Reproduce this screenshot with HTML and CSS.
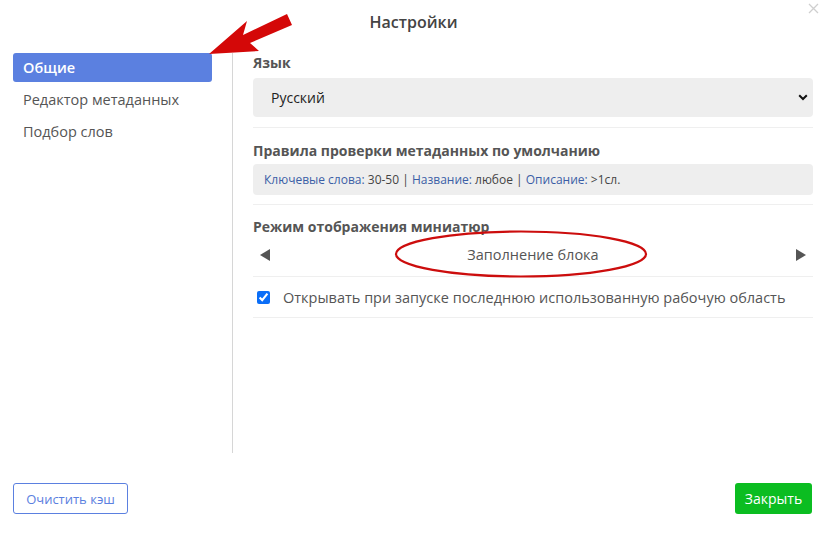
FILE: index.html
```html
<!DOCTYPE html>
<html lang="ru">
<head>
<meta charset="utf-8">
<title>Настройки</title>
<link rel="stylesheet" href="styles.css">
</head>
<body>
<div class="dialog">
  <header class="header">
    <h1 class="title">Настройки</h1>
    <button class="close" aria-label="Закрыть">
      <svg width="11" height="11" viewBox="0 0 11 11"><path d="M1 1L10 10M10 1L1 10" stroke="#cfcfcf" stroke-width="1.3" fill="none"/></svg>
    </button>
  </header>
  <div class="main">
    <nav class="sidebar">
      <a class="nav-item active">Общие</a>
      <a class="nav-item">Редактор метаданных</a>
      <a class="nav-item">Подбор слов</a>
    </nav>
    <section class="content">
      <div class="group group-lang">
        <div class="label">Язык</div>
        <div class="select-wrap">
          <select class="select"><option>Русский</option></select>
          <svg class="chevron" width="10" height="7" viewBox="0 0 10 7"><path d="M1.2 1.2L5 5L8.8 1.2" stroke="#111" stroke-width="2" fill="none"/></svg>
        </div>
      </div>
      <div class="group group-rules">
        <div class="label">Правила проверки метаданных по умолчанию</div>
        <div class="rules"><span class="key">Ключевые слова:</span> 30-50 | <span class="key">Название:</span> любое | <span class="key">Описание:</span> &gt;1сл.</div>
      </div>
      <div class="group group-thumb">
        <div class="label">Режим отображения миниатюр</div>
        <div class="switcher">
          <span class="tri tri-left"></span>
          <span class="switch-value">Заполнение блока</span>
          <span class="tri tri-right"></span>
        </div>
      </div>
      <label class="group group-check">
        <input type="checkbox" class="check" checked>
        <span>Открывать при запуске последнюю использованную рабочую область</span>
      </label>
    </section>
  </div>
  <footer class="footer">
    <button class="btn btn-outline">Очистить кэш</button>
    <button class="btn btn-green">Закрыть</button>
  </footer>

  <svg class="annot" width="823" height="539" viewBox="0 0 823 539">
    <polygon points="209,54 247,21 243,35 287,14 292,25 250,43 259,51" fill="#d40808"/>
    <ellipse cx="521" cy="254" rx="125" ry="22.5" fill="none" stroke="#cc0d0d" stroke-width="2.2"/>
  </svg>
</div>
</body>
</html>
```
FILE: styles.css
```css
* { box-sizing: border-box; }
html, body { margin: 0; padding: 0; background: #fff; }
body {
  font-family: "Open Sans", "Noto Sans", sans-serif;
  font-size: 14px;
  color: #555;
}
.dialog {
  position: relative;
  width: 823px;
  height: 539px;
  display: flex;
  flex-direction: column;
}
.header {
  height: 53px;
  display: flex;
  justify-content: center;
  padding-top: 10px;
}
.title {
  margin: 0;
  font-size: 16px;
  font-weight: 600;
  color: #444;
  line-height: 24px;
  padding-left: 4px;
}
.close {
  position: absolute;
  right: 3px;
  top: 2px;
  border: 0;
  background: none;
  padding: 0;
  width: 13px;
  height: 13px;
}
.main {
  display: flex;
  height: 400px;
}
.sidebar {
  width: 233px;
  padding-left: 13px;
  padding-right: 20px;
  border-right: 1px solid #d6d6d6;
  display: flex;
  flex-direction: column;
  gap: 3px;
}
.nav-item {
  display: block;
  height: 29px;
  line-height: 29px;
  padding-left: 10px;
  border-radius: 3px;
  color: #555;
  font-size: 14.5px;
}
.nav-item.active {
  background: #5b80e0;
  color: #fff;
  font-weight: 600;
}
.content {
  flex: 1;
  padding-left: 20px;
  padding-right: 10px;
}
.group {
  border-bottom: 1px solid #efefef;
}
.label {
  font-weight: 700;
  color: #555;
  line-height: 20px;
  font-size: 14px;
}
.group-lang { padding-bottom: 10px; }
.group-lang .label { margin-bottom: 5px; }
.select-wrap { position: relative; }
.select {
  appearance: none;
  -webkit-appearance: none;
  width: 100%;
  height: 39px;
  border: 0;
  border-radius: 4px;
  background: #eeeeee;
  font-family: inherit;
  font-size: 14px;
  color: #222;
  padding-left: 18px;
}
.chevron {
  position: absolute;
  right: 5px;
  top: 16px;
}
.group-rules { padding-top: 13px; padding-bottom: 9px; }
.group-rules .label { margin-bottom: 3px; }
.rules {
  background: #eeeeee;
  border-radius: 4px;
  height: 31px;
  line-height: 31px;
  padding-left: 11px;
  font-size: 12px;
  color: #444;
}
.key { color: #3b5ea6; }
.group-thumb { padding-top: 12px; padding-bottom: 4px; }
.switcher {
  height: 35px;
  display: flex;
  align-items: center;
  justify-content: space-between;
  padding: 0 7px 0 7px;
}
.switch-value {
  color: #555;
  font-size: 14.5px;
}
.tri {
  width: 0;
  height: 0;
  border-top: 6.5px solid transparent;
  border-bottom: 6.5px solid transparent;
}
.tri-left { border-right: 10px solid #555; }
.tri-right { border-left: 10px solid #555; }
.group-check {
  display: flex;
  align-items: center;
  height: 41px;
  padding-left: 4px;
  gap: 13px;
  color: #555;
  font-size: 14.5px;
}
.check {
  margin: 0;
  width: 13px;
  height: 13px;
  accent-color: #0b6ef7;
}
.footer {
  display: flex;
  justify-content: space-between;
  padding: 30px 11px 0 13px;
}
.btn {
  height: 31px;
  border-radius: 3px;
  font-family: inherit;
  font-size: 13px;
}
.btn-outline {
  width: 115px;
  border: 1px solid #5b80e0;
  background: #fff;
  color: #5b80e0;
}
.btn-green {
  width: 77px;
  border: 0;
  background: #0bbd21;
  color: #fff;
  font-size: 14px;
}
.annot {
  position: absolute;
  left: 0;
  top: 0;
  pointer-events: none;
}
```
